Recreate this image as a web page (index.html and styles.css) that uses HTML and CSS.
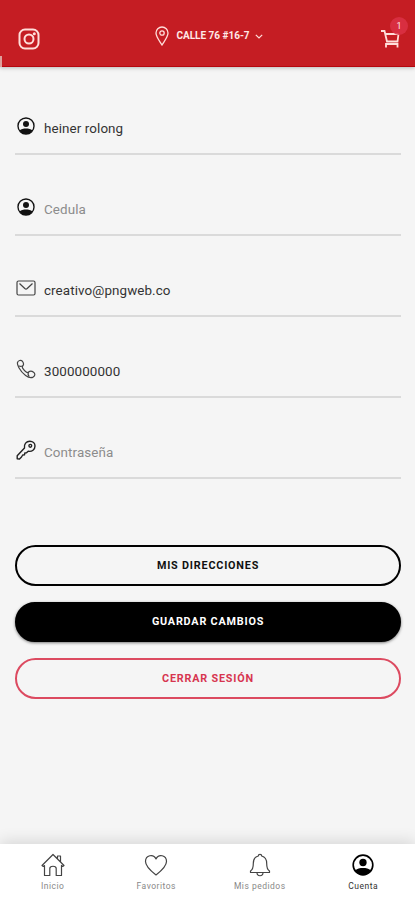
FILE: index.html
```html
<!DOCTYPE html>
<html lang="es">
<head>
    <meta charset="UTF-8">
    <meta name="viewport" content="width=device-width, initial-scale=1.0">
    <title>Cuenta</title>
    <link rel="stylesheet" href="styles.css">
</head>
<body>
    <svg class="sprite">
        <symbol id="user" viewBox="0 0 24 24">
            <circle cx="12" cy="12" r="10.7" fill="none" stroke="currentColor" stroke-width="1.8"/>
            <circle cx="12" cy="9.3" r="4" fill="currentColor"/>
            <path d="M3.4 18c2.3-2 5.2-2.6 8.6-2.6s6.3.6 8.6 2.6C18.5 21.3 15.5 22.7 12 22.7S5.5 21.3 3.4 18z" fill="currentColor"/>
        </symbol>
    </svg>

    <header class="header">
        <svg class="instagram" viewBox="0 0 22 22">
            <rect x="1.5" y="1.5" width="19" height="19" rx="5.5"/>
            <circle cx="11" cy="11" r="4.5"/>
            <circle class="dot" cx="16.3" cy="5.7" r="1.5"/>
        </svg>
        <div class="address">
            <svg class="pin" viewBox="0 0 14 20">
                <path d="M7 19C5 15.500 1 11 1 7a6 6 0 0 1 12 0c0 4-4 8.500-6 12z"/>
                <circle cx="7" cy="7" r="2.2"/>
            </svg>
            <span>CALLE 76 #16-7</span>
            <svg class="chevron" viewBox="0 0 8 5"><path d="M.8.8 4 4 7.200.8"/></svg>
        </div>
        <div class="cart">
            <svg viewBox="0 0 20 20">
                <path d="M1 2h3.500L7 12.500h10.500L18.500 5M5.200 5H18.500M6 18.500v-3.500h11.500v3.500"/>
            </svg>
            <span class="badge">1</span>
        </div>
    </header>

    <main class="content">
        <form class="account-form">
            <label class="field">
                <svg><use href="#user"/></svg>
                <input type="text" value="heiner rolong">
            </label>
            <label class="field">
                <svg><use href="#user"/></svg>
                <input type="text" placeholder="Cedula">
            </label>
            <label class="field">
                <svg class="line" viewBox="0 0 20 20">
                    <rect x="1" y="3" width="18" height="14" rx="1.5"/>
                    <path d="m3.500 5.500 5.300 5c.8.7 1.600.7 2.400 0l5.300-5"/>
                </svg>
                <input type="text" value="creativo@pngweb.co">
            </label>
            <label class="field">
                <svg class="line" viewBox="0 0 20 20">
                    <path d="M1.500 3.500C2 1.500 5 .5 6.300 2.200 7.500 3.700 8 5.500 6.800 6.800c-.7.800-.7 1.500 0 2.600 1 1.500 2 2.600 3.400 3.600 1 .7 1.700.7 2.400 0 1.500-1.200 3.500-.9 5 .3 2 1.500 1.300 3.800-.5 4.800-2.300 1.200-5 .2-7.500-1.600-2.800-2-5-4.600-6.700-7.700C1.900 6.900 1.100 5.200 1.500 3.500z"/>
                    <path d="M2.600 6.600c1.200 1 2.600 1.100 4.200.2M12.600 13c-.9 1.500-.6 3.200.6 4.600"/>
                </svg>
                <input type="text" value="3000000000">
            </label>
            <label class="field">
                <svg class="line key" viewBox="0 0 20 20">
                    <path d="M8.500 8C7.800 4 10.300 1.200 13.800 1.200c3 0 5.200 2 5.200 4.800 0 3.500-3 6-6.800 5.200L10.500 12.800 8.800 13 8.500 14.800 6.700 15 5.500 17 3.500 19 1.200 18.700V15.800z"/>
                    <circle cx="14.3" cy="5.8" r="1.4"/>
                </svg>
                <input type="password" placeholder="Contraseña">
            </label>

            <div class="actions">
                <button type="button" class="btn">MIS DIRECCIONES</button>
                <button type="button" class="btn btn-dark">GUARDAR CAMBIOS</button>
                <button type="button" class="btn btn-red">CERRAR SESIÓN</button>
            </div>
        </form>
    </main>

    <nav class="tabs">
        <a class="tab">
            <svg class="line" viewBox="0 0 24 24">
                <path d="M1 12.500 12 1.500l11 11-1.300 1-1.200-1v10h-5.300v-7c0-3-6.400-3-6.400 0v7H3.500v-10l-1.200 1zM16.500 5.800V3h3v5.800"/>
            </svg>
            <span>Inicio</span>
        </a>
        <a class="tab">
            <svg class="line" viewBox="0 0 24 24">
                <path d="M12 22C7.500 18.500 1.500 13.500 1.500 8.500c0-6.500 8-8 10.500-2.500C14.500 .5 22.500 2 22.500 8.500c0 5-6 10-10.500 13.500z"/>
            </svg>
            <span>Favoritos</span>
        </a>
        <a class="tab">
            <svg class="line" viewBox="0 0 24 24">
                <path d="M10.300 3c0-2.200 3.400-2.200 3.400 0 3.800 1 5 4 5 7.500 0 4.500 1 6.500 2.800 7.500v1.500h-19V18c1.800-1 2.800-3 2.800-7.500C5.300 7 6.500 4 10.300 3zM9 19.500c0 4.300 6 4.300 6 0"/>
            </svg>
            <span>Mis pedidos</span>
        </a>
        <a class="tab active">
            <svg><use href="#user"/></svg>
            <span>Cuenta</span>
        </a>
    </nav>
</body>
</html>
```
FILE: styles.css
```css
* {
    box-sizing: border-box;
}
body {
    display: flex;
    flex-direction: column;
    height: 100vh;
    margin: 0;
    background-color: #f5f5f5;
    font-family: Roboto, sans-serif;
    overflow: hidden;
}
.sprite {
    display: none;
}
svg {
    display: block;
    flex: none;
}

/* Header */
.header {
    position: relative;
    display: grid;
    grid-template-columns: 1fr auto 1fr;
    height: 67px;
    flex: none;
    padding: 0 14px 0 18px;
    background-color: #c51d23;
    border-bottom: 1px solid #b5070e;
    color: #ffe8e6;
    box-shadow: 0 1px 4px rgba(0, 0, 0, 0.25);
}
.header::before {
    content: "";
    position: absolute;
    left: 0;
    bottom: -1px;
    width: 2px;
    height: 11px;
    background-color: #dda09c;
}
.header svg {
    fill: none;
    stroke: #ffdeda;
}
.instagram {
    width: 22px;
    height: 22px;
    margin-top: 28px;
    stroke-width: 2;
}
.header .dot {
    fill: #ffdeda;
    stroke: none;
}
.address {
    display: flex;
    align-items: center;
    height: 20px;
    margin-top: 26px;
    margin-right: 1px;
    font-size: 10px;
    font-weight: 700;
    line-height: 12px;
}
.address span {
    margin-bottom: 1px;
}
.pin {
    width: 14px;
    height: 20px;
    margin-right: 7px;
    stroke-width: 1.3;
}
.chevron {
    width: 8px;
    height: 5px;
    margin-left: 5px;
    stroke-width: 1.2;
}
.cart {
    position: relative;
    justify-self: end;
    margin-top: 29px;
    margin-right: 1px;
}
.cart svg {
    width: 20px;
    height: 20px;
    stroke-width: 1.8;
}
.badge {
    position: absolute;
    top: -12px;
    right: -8px;
    width: 18px;
    height: 18px;
    border-radius: 50%;
    background-color: rgba(219, 49, 69, 0.85);
    font-size: 9px;
    line-height: 18px;
    text-align: center;
}

/* Account form */
.content {
    flex: 1;
    padding: 7px 14px 0 15px;
}
.field {
    display: flex;
    align-items: center;
    height: 81px;
    padding-top: 29px;
    border-bottom: 2px solid #dadada;
    color: #111;
}
.field svg {
    width: 18px;
    height: 18px;
    margin: 0 9px 5px 2px;
}
.field .line {
    width: 20px;
    height: 20px;
    margin: 0 8px 5px 1px;
}
.line {
    fill: none;
    stroke: #444;
    stroke-width: 1.2;
    stroke-linejoin: round;
}
.field .key {
    stroke: #222;
    stroke-width: 1.4;
}
.field input {
    flex: 1;
    min-width: 0;
    padding: 0;
    border: 0;
    outline: 0;
    background: none;
    color: #333;
    font-family: inherit;
    font-size: 13.4px;
    letter-spacing: 0.1px;
}
.field input::placeholder {
    color: #8c8c8c;
}
.actions {
    display: flex;
    flex-direction: column;
    gap: 16px;
    margin-top: 66px;
}
.btn {
    height: 40.5px;
    border: 2px solid #000;
    border-radius: 21px;
    background: transparent;
    color: #111;
    font-family: inherit;
    font-size: 10.8px;
    font-weight: 700;
    letter-spacing: 0.8px;
}
.btn-dark {
    background-color: #000;
    color: #fff;
    box-shadow: 0 1px 3px rgba(0, 0, 0, 0.5);
}
.btn-red {
    border-color: #dc4a60;
    color: #d73550;
}

/* Bottom tabs */
.tabs {
    display: grid;
    grid-template-columns: repeat(4, 1fr);
    height: 56px;
    flex: none;
    padding-left: 1px;
    background-color: #fff;
    box-shadow: 0 -3px 14px rgba(0, 0, 0, 0.12);
}
.tab {
    display: flex;
    flex-direction: column;
    align-items: center;
    padding-top: 9px;
    color: #888;
    font-size: 8.5px;
    letter-spacing: 0.5px;
    line-height: 11px;
}
.tab svg {
    width: 24px;
    height: 24px;
    margin-bottom: 4px;
}
.tab.active {
    color: #333;
}
.tab.active svg {
    width: 22px;
    height: 22px;
    margin: 1px 0 5px;
    color: #000;
}
```
